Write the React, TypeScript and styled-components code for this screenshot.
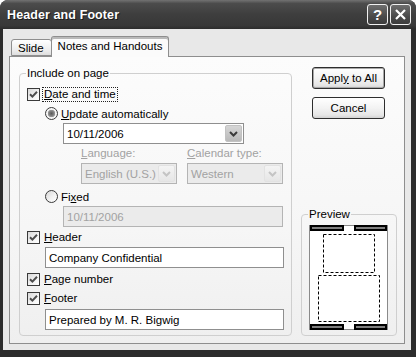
import styled, { createGlobalStyle } from "styled-components";

const GlobalStyle = createGlobalStyle`
  html, body {
    margin: 0;
    padding: 0;
    background: #ffffff;
  }
  body {
    font-family: "Liberation Sans", Arial, sans-serif;
    font-size: 11px;
    color: #000;
  }
  * {
    box-sizing: border-box;
  }
`;

const Window = styled.div`
  width: 416px;
  height: 357px;
  background: #2c2c2c;
  border-radius: 8px 8px 0 0;
  display: flex;
  flex-direction: column;
  overflow: hidden;
`;

const TitleBar = styled.div`
  height: 29px;
  flex: none;
  display: flex;
  align-items: center;
  justify-content: space-between;
  padding: 0 5px 0 7px;
  background: linear-gradient(
    #727272 0%,
    #4c4c4c 12%,
    #3e3e3e 50%,
    #383838 88%,
    #2c2c2c 100%
  );
`;

const Title = styled.span`
  color: #fff;
  font-weight: bold;
  font-size: 12.5px;
  letter-spacing: 0.1px;
  text-shadow: 1px 1px 0 #1a1a1a;
`;

const CaptionButtons = styled.div`
  display: flex;
  gap: 2px;
`;

const CaptionButton = styled.div`
  width: 21px;
  height: 21px;
  border: 1px solid #f0f0f0;
  border-radius: 3px;
  background: linear-gradient(#6e6e6e, #4a4a4a 60%, #3c3c3c);
  color: #fff;
  font-weight: bold;
  font-size: 15px;
  display: flex;
  align-items: center;
  justify-content: center;
`;

const Body = styled.div`
  flex: 1;
  margin: 0 5px 7px 3px;
  background: #e8e8e8;
  padding: 7px 6px 6px 6px;
  display: flex;
  flex-direction: column;
`;

const TabStrip = styled.div`
  display: flex;
  align-items: flex-end;
  height: 21px;
  padding-left: 2px;
  margin-bottom: -1px;
  position: relative;
  z-index: 1;
`;

const Tab = styled.div<{ $active?: boolean }>`
  height: ${(p) => (p.$active ? 21 : 17)}px;
  padding: ${(p) => (p.$active ? "3px 6px 0 6px" : "2px 7px 0 6px")};
  margin-bottom: ${(p) => (p.$active ? 0 : 1)}px;
  margin-left: ${(p) => (p.$active ? -1 : 0)}px;
  border: 1px solid #8e8e8e;
  border-bottom: ${(p) => (p.$active ? "none" : "1px solid #8e8e8e")};
  border-radius: 3px 3px 0 0;
  background: ${(p) =>
    p.$active ? "#fbfbfb" : "linear-gradient(#ffffff, #ececec 70%, #dedede)"};
  box-shadow: ${(p) => (p.$active ? "inset 0 2px 0 #b9b9b9" : "none")};
  font-size: 11.5px;
`;

const TabPanel = styled.div`
  flex: 1;
  border: 1px solid #8e8e8e;
  background: linear-gradient(#fcfcfc, #f6f6f6 60%, #efefef);
  padding: 10px 7px 7px 9px;
  display: flex;
  gap: 9px;
`;

const Group = styled.fieldset`
  margin: 0;
  width: 274px;
  border: 1px solid #cfcfcf;
  border-radius: 4px;
  padding: 5px 6px 5px 7px;
  display: flex;
  flex-direction: column;
`;

const Legend = styled.legend`
  padding: 0 1px;
  margin-left: -1px;
  font-size: 11.5px;
  line-height: 13px;
`;

const OptionRow = styled.div<{ $indent?: number; $mt?: number }>`
  display: flex;
  align-items: center;
  height: 19px;
  padding-left: ${(p) => p.$indent ?? 0}px;
  margin-top: ${(p) => p.$mt ?? 0}px;
  font-size: 11.5px;
`;

const CheckBox = styled.div`
  width: 13px;
  height: 13px;
  flex: none;
  border: 1px solid #3a3a3a;
  background: linear-gradient(135deg, #d8d8d8, #f4f4f4 60%, #ffffff);
  margin-right: 2px;
  display: flex;
  align-items: center;
  justify-content: center;
`;

const Radio = styled.div<{ $checked?: boolean }>`
  width: 13px;
  height: 13px;
  flex: none;
  border-radius: 50%;
  border: 1px solid #3a3a3a;
  background: ${(p) =>
    p.$checked
      ? "radial-gradient(circle, #5a5a5a 0, #7a7a7a 2px, #9a9a9a 3.5px, #f2f2f2 4px, #ffffff 100%)"
      : "linear-gradient(135deg, #d8d8d8, #f4f4f4 60%, #ffffff)"};
  margin-right: 3px;
`;

const Label = styled.span<{ $focus?: boolean }>`
  padding: 0 1px;
  line-height: 13px;
  border: 1px dotted ${(p) => (p.$focus ? "#222" : "transparent")};
`;

const Key = styled.span`
  text-decoration: underline;
  text-underline-offset: 1px;
`;

const Field = styled.div<{ $indent: number; $width: number; $mt?: number; $disabled?: boolean }>`
  margin-left: ${(p) => p.$indent}px;
  margin-top: ${(p) => p.$mt ?? 0}px;
  width: ${(p) => p.$width}px;
  height: 21px;
  flex: none;
  border: 1px solid ${(p) => (p.$disabled ? "#b4b4b4" : "#8f8f8f")};
  background: ${(p) => (p.$disabled ? "#ebebeb" : "#ffffff")};
  color: ${(p) => (p.$disabled ? "#a2a2a2" : "#000")};
  display: flex;
  align-items: center;
  justify-content: space-between;
  padding: 1px 1px 1px 3px;
  font-size: 11.5px;
`;

const ComboArrow = styled.div<{ $disabled?: boolean }>`
  width: 17px;
  height: 17px;
  border-radius: 2px;
  border: 1px solid ${(p) => (p.$disabled ? "#e2e2e2" : "#c2c2c2")};
  background: ${(p) =>
    p.$disabled
      ? "linear-gradient(#f4f4f4, #e6e6e6)"
      : "linear-gradient(#d6d6d6, #b9b9b9)"};
  display: flex;
  align-items: center;
  justify-content: center;
`;

const SubLabels = styled.div`
  display: flex;
  gap: 11px;
  margin: 3px 0 0 54px;
  height: 14px;
  color: #a2a2a2;
  font-size: 11.5px;
`;

const SubLabel = styled.span`
  width: 95px;
`;

const ComboPair = styled.div`
  display: flex;
  gap: 10px;
  margin: 2px 0 0 54px;
`;

const SideColumn = styled.div`
  width: 96px;
  display: flex;
  flex-direction: column;
`;

const Button = styled.div<{ $default?: boolean; $mt?: number }>`
  width: 73px;
  height: 22px;
  margin: ${(p) => p.$mt ?? 0}px 0 0 11px;
  border: 1px solid #2e2e2e;
  border-radius: 3px;
  background: linear-gradient(#ffffff, #f3f3f3 50%, #e6e6e6 85%, #d2d2d2);
  box-shadow: ${(p) => (p.$default ? "inset 0 0 0 1px #a8a8a8" : "none")};
  display: flex;
  align-items: center;
  justify-content: center;
  font-size: 11.5px;
`;

const PreviewGroup = styled.fieldset`
  margin: auto 0 0 0;
  width: 96px;
  border: 1px solid #cfcfcf;
  border-radius: 4px;
  padding: 4px 7px 5px 7px;
`;

function Check() {
  return (
    <svg width="9" height="9" viewBox="0 0 9 9">
      <path d="M1 4.2 L3.4 6.6 L8 1.8" fill="none" stroke="#4d4d4d" strokeWidth="2" />
    </svg>
  );
}

function Chevron({ color }: { color: string }) {
  return (
    <svg width="9" height="6" viewBox="0 0 9 6">
      <path d="M1 1 L4.5 4.5 L8 1" fill="none" stroke={color} strokeWidth="2" />
    </svg>
  );
}

function Combo(props: {
  text: string;
  indent: number;
  width: number;
  disabled?: boolean;
}) {
  return (
    <Field $indent={props.indent} $width={props.width} $disabled={props.disabled}>
      <span>{props.text}</span>
      <ComboArrow $disabled={props.disabled}>
        <Chevron color={props.disabled ? "#c4c4c4" : "#3a3a3a"} />
      </ComboArrow>
    </Field>
  );
}

function PreviewPicture() {
  const bar = (x: number, y: number, w: number) => (
    <g>
      <rect x={x} y={y} width={w} height={6} fill="#000" />
      <line x1={x + 2} y1={y + 3} x2={x + w - 2} y2={y + 3} stroke="#fff" strokeWidth="1" />
    </g>
  );
  return (
    <svg width="79" height="105" viewBox="0 0 79 105" style={{ display: "block" }}>
      <rect x="0.5" y="0.5" width="78" height="104" fill="#fff" stroke="#8a8a8a" />
      {bar(1, 0, 34)}
      {bar(45, 0, 33)}
      <rect x="14.5" y="9.5" width="51" height="38" fill="none" stroke="#000" strokeDasharray="3 2" />
      <rect x="9.5" y="50.5" width="61" height="46" fill="none" stroke="#000" strokeDasharray="3 2" />
      {bar(1, 99, 34)}
      {bar(45, 99, 33)}
    </svg>
  );
}

export default function App() {
  return (
    <>
      <GlobalStyle />
      <Window>
        <TitleBar>
          <Title>Header and Footer</Title>
          <CaptionButtons>
            <CaptionButton>?</CaptionButton>
            <CaptionButton>
              <svg width="11" height="11" viewBox="0 0 11 11">
                <path d="M1 1 L10 10 M10 1 L1 10" stroke="#fff" strokeWidth="2.2" />
              </svg>
            </CaptionButton>
          </CaptionButtons>
        </TitleBar>
        <Body>
          <TabStrip>
            <Tab>Slide</Tab>
            <Tab $active>Notes and Handouts</Tab>
          </TabStrip>
          <TabPanel>
            <Group>
              <Legend>Include on page</Legend>
              <OptionRow>
                <CheckBox>
                  <Check />
                </CheckBox>
                <Label $focus>
                  <Key>D</Key>ate and time
                </Label>
              </OptionRow>
              <OptionRow $indent={18}>
                <Radio $checked />
                <span>
                  <Key>U</Key>pdate automatically
                </span>
              </OptionRow>
              <Combo text="10/11/2006" indent={36} width={181} />
              <SubLabels>
                <SubLabel>
                  <Key>L</Key>anguage:
                </SubLabel>
                <SubLabel>
                  <Key>C</Key>alendar type:
                </SubLabel>
              </SubLabels>
              <ComboPair>
                <Combo text="English (U.S.)" indent={0} width={96} disabled />
                <Combo text="Western" indent={0} width={96} disabled />
              </ComboPair>
              <OptionRow $indent={18} $mt={3}>
                <Radio />
                <span>
                  Fi<Key>x</Key>ed
                </span>
              </OptionRow>
              <Field $indent={36} $width={220} $disabled>
                10/11/2006
              </Field>
              <OptionRow $mt={1}>
                <CheckBox>
                  <Check />
                </CheckBox>
                <Label>
                  <Key>H</Key>eader
                </Label>
              </OptionRow>
              <Field $indent={18} $width={239}>
                Company Confidential
              </Field>
              <OptionRow $mt={2}>
                <CheckBox>
                  <Check />
                </CheckBox>
                <Label>
                  <Key>P</Key>age number
                </Label>
              </OptionRow>
              <OptionRow>
                <CheckBox>
                  <Check />
                </CheckBox>
                <Label>
                  <Key>F</Key>ooter
                </Label>
              </OptionRow>
              <Field $indent={18} $width={239} $mt={1}>
                Prepared by M. R. Bigwig
              </Field>
            </Group>
            <SideColumn>
              <Button $default>
                Appl<Key>y</Key>&nbsp;to All
              </Button>
              <Button $mt={8}>Cancel</Button>
              <PreviewGroup>
                <Legend>Preview</Legend>
                <PreviewPicture />
              </PreviewGroup>
            </SideColumn>
          </TabPanel>
        </Body>
      </Window>
    </>
  );
}
